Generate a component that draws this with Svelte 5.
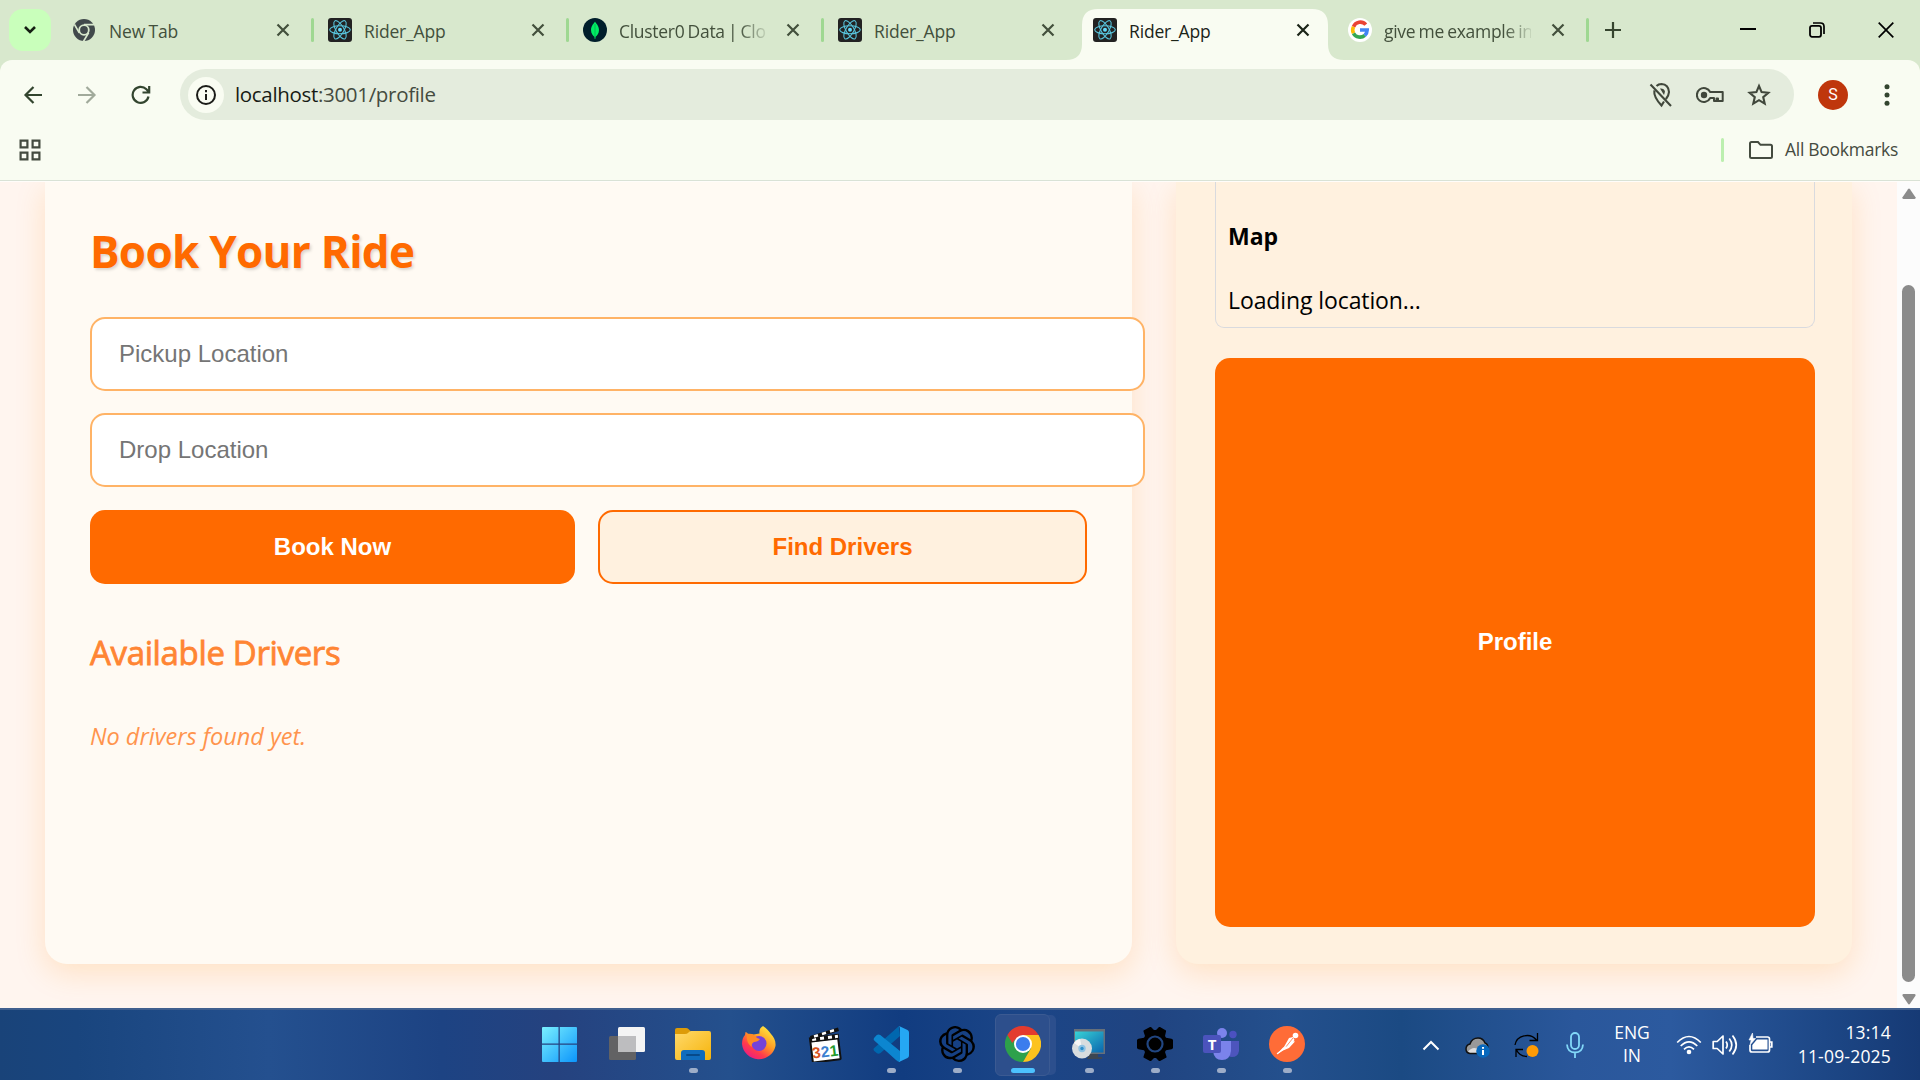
<script>
  const tabs = [
    { icon: 'newtab', title: 'New Tab' },
    { icon: 'react', title: 'Rider_App' },
    { icon: 'mongo', title: 'Cluster0 Data | Clo', fade: true },
    { icon: 'react', title: 'Rider_App' },
    { icon: 'react', title: 'Rider_App', active: true },
    { icon: 'google', title: 'give me example in', fade: true },
  ];
  const apps = ['start', 'taskview', 'explorer', 'firefox', 'mpc', 'vscode', 'gpt', 'chrome', 'installer', 'settings', 'teams', 'postman'];
  const running = ['explorer', 'vscode', 'gpt', 'installer', 'settings', 'teams', 'postman'];
</script>

{#snippet favicon(name)}
  {#if name === 'newtab'}
    <svg width="24" height="24" viewBox="0 0 24 24">
      <circle cx="11" cy="12" r="11" fill="#41494b" />
      <circle cx="11" cy="12" r="4.8" fill="none" stroke="#d8e8cd" stroke-width="1.8" />
      <path d="M11 6.6h10M6.3 14.8 1.4 6.3M15.6 14.8 10.5 23.4" stroke="#d8e8cd" stroke-width="1.7" />
    </svg>
  {:else if name === 'react'}
    <svg width="24" height="24" viewBox="0 0 24 24">
      <rect width="24" height="24" rx="3" fill="#222222" />
      <g fill="none" stroke="#58c4dc" stroke-width="1.1">
        <ellipse cx="12" cy="11.8" rx="10.3" ry="4" />
        <ellipse cx="12" cy="11.8" rx="10.3" ry="4" transform="rotate(60 12 11.8)" />
        <ellipse cx="12" cy="11.8" rx="10.3" ry="4" transform="rotate(120 12 11.8)" />
      </g>
      <circle cx="12" cy="11.8" r="2" fill="#61dafb" />
    </svg>
  {:else if name === 'mongo'}
    <svg width="24" height="24" viewBox="0 0 24 24">
      <circle cx="12" cy="12" r="12" fill="#001e2b" />
      <path d="M12 3.4c.5 1.6 4 3.8 4 8.600 0 3.600-2 5.600-3.400 6.700l-.3 2.400h-.6l-.3-2.400C10 17.600 8 15.600 8 12c0-4.800 3.500-7 4-8.600z" fill="#00ed64" />
      <path d="M12 6v13" stroke="#00a64a" stroke-width=".7" />
    </svg>
  {:else}
    <svg width="24" height="24" viewBox="0 0 24 24">
      <circle cx="12" cy="12" r="12" fill="#fff" />
      <g fill="none" stroke-width="3.600">
        <path d="M17.800 6.700A7.300 7.300 0 0 0 5.500 8.700" stroke="#ea4335" />
        <path d="M5.500 8.700a7.300 7.300 0 0 0 0 6.600" stroke="#fbbc05" />
        <path d="M5.500 15.300a7.300 7.300 0 0 0 11.300 2" stroke="#34a853" />
        <path d="M12 12h7.200a7.300 7.300 0 0 1-2.400 5.300" stroke="#4285f4" />
      </g>
    </svg>
  {/if}
{/snippet}

{#snippet appIcon(name)}
  <svg width="36" height="36" viewBox="0 0 36 36">
    {#if name === 'start'}
      <defs><linearGradient id="win" gradientUnits="userSpaceOnUse" x1="0" y1="0" x2="36" y2="36"><stop offset="0" stop-color="#7df3ff" /><stop offset="1" stop-color="#0c95fb" /></linearGradient></defs>
      <path d="M1 2a1 1 0 0 1 1-1h15.500v16.500H1zM18.800 1H35a1 1 0 0 1 1 1v15.500H18.800zM1 18.800h16.500V36H2a1 1 0 0 1-1-1zM18.800 18.800H36V35a1 1 0 0 1-1 1H18.800z" fill="url(#win)" />
    {:else if name === 'taskview'}
      <rect x="0" y="10" width="27" height="24" rx="1.500" fill="#626264" />
      <rect x="9" y="1" width="27" height="25" rx="1.500" fill="#f4f4f4" />
      <path d="M9 10h18v16H10a1 1 0 0 1-1-1z" fill="#bdbdbf" />
    {:else if name === 'explorer'}
      <defs><linearGradient id="fold" x1="0" y1="0" x2="1" y2="1"><stop offset="0" stop-color="#ffd96b" /><stop offset="1" stop-color="#f6b40b" /></linearGradient></defs>
      <path d="M0 4a2 2 0 0 1 2-2h9q1.500 0 2.500 1l2 2v6H0z" fill="#dd9b08" />
      <path d="M0 8h10q2 0 3-1l1-1q1-1 2.500-1H34a2 2 0 0 1 2 2v25a2 2 0 0 1-2 2H2a2 2 0 0 1-2-2z" fill="url(#fold)" />
      <path d="M6 34v-7a3 3 0 0 1 3-3h18a3 3 0 0 1 3 3v7z" fill="#0f6cbd" />
      <path d="M12 29h12" stroke="#074a8a" stroke-width="2" stroke-linecap="round" />
    {:else if name === 'firefox'}
      <defs><linearGradient id="fox" x1=".85" y1=".1" x2=".2" y2="1"><stop offset="0" stop-color="#ffe63f" /><stop offset=".4" stop-color="#ff9a24" /><stop offset=".7" stop-color="#ff3b4c" /><stop offset="1" stop-color="#e9178b" /></linearGradient></defs>
      <path d="M22 0c4 3 6 5 8 8 3 3 5 7 4.500 12A17 17 0 0 1 1 18c0-4 1-7 3-9l.5-3c1 .2 2 1.200 3 2.300 2-.6 4-.3 5 .2l6-1C18 4 19 2 22 0z" fill="url(#fox)" />
      <circle cx="18" cy="17.500" r="7.500" fill="#7542d9" />
      <path d="M6 8c5-1 8 1 10 4l3 1c-1 2-4 3-6 3-2 1-3 3-2 5-4-2-6-8-5-13z" fill="#ff8a24" />
    {:else if name === 'mpc'}
      <g transform="rotate(-7 18 20)">
        <rect x="4" y="14" width="28" height="21" rx="1" fill="#fff" stroke="#111" stroke-width="2" />
        <rect x="3" y="9.500" width="30" height="5" fill="#111" />
        <path d="M6 12h4m4 0h4m4 0h4m3 0h3" stroke="#fff" stroke-width="3" />
      </g>
      <path d="M3 10 31 1.500l1 3.500L4 13.500z" fill="#111" />
      <path d="m7 10.500 4-1.200m4-1.300 4-1.200m4-1.300 4-1.200" stroke="#fff" stroke-width="2.500" />
      <g font-family="Liberation Sans" font-weight="700" font-size="15.500" transform="rotate(-7 18 25)"><text x="5" y="31" fill="#d8531e">3</text><text x="13.800" y="31" fill="#3b7fd0">2</text><text x="22.500" y="31" fill="#249a2c">1</text></g>
    {:else if name === 'vscode'}
      <path d="M26 0 27 10 7.500 27q-2 1.200-3.500.2l-2.500-2q-2-1.700 0-3.400z" fill="#0067ae" />
      <path d="M1 12 3.800 9q1.700-1.200 3.500 0L27 25v11q-2 0-4-2L1.500 14.800Q0 13.500 1 12z" fill="#0c86d0" />
      <path d="m26 0 8.500 4q1.500.8 1.500 2.500v23q0 1.700-1.500 2.500L26 36q1-1 1-3V3q0-2-1-3z" fill="#25a7f3" />
    {:else if name === 'gpt'}
      <path transform="scale(1.500)" fill="#000" d="M22.282 9.821a5.985 5.985 0 0 0-.516-4.910 6.046 6.046 0 0 0-6.510-2.900A6.065 6.065 0 0 0 4.981 4.182a5.985 5.985 0 0 0-3.998 2.900 6.046 6.046 0 0 0 .743 7.097 5.980 5.980 0 0 0 .510 4.911 6.051 6.051 0 0 0 6.515 2.900A5.985 5.985 0 0 0 13.260 24a6.056 6.056 0 0 0 5.772-4.206 5.990 5.990 0 0 0 3.998-2.900 6.056 6.056 0 0 0-.748-7.073zM13.260 22.430a4.476 4.476 0 0 1-2.876-1.040l.141-.081 4.779-2.758a.795.795 0 0 0 .393-.681v-6.737l2.020 1.168a.071.071 0 0 1 .038.052v5.583a4.504 4.504 0 0 1-4.495 4.494zM3.600 18.304a4.470 4.470 0 0 1-.535-3.014l.142.085 4.783 2.759a.771.771 0 0 0 .781 0l5.843-3.369v2.332a.080.080 0 0 1-.033.062L9.740 19.950a4.500 4.500 0 0 1-6.140-1.646zM2.341 7.896a4.485 4.485 0 0 1 2.366-1.973V11.600a.766.766 0 0 0 .388.677l5.815 3.355-2.020 1.168a.076.076 0 0 1-.071 0l-4.830-2.787A4.504 4.504 0 0 1 2.341 7.872zm16.597 3.855-5.833-3.387L15.119 7.200a.076.076 0 0 1 .071 0l4.830 2.791a4.494 4.494 0 0 1-.676 8.105v-5.678a.790.790 0 0 0-.406-.667zm2.010-3.023-.141-.085-4.774-2.782a.776.776 0 0 0-.785 0L9.409 9.230V6.897a.066.066 0 0 1 .028-.061l4.830-2.787a4.500 4.500 0 0 1 6.681 4.660zM8.307 12.863l-2.020-1.164a.080.080 0 0 1-.038-.057V6.075a4.500 4.500 0 0 1 7.376-3.454l-.142.080-4.778 2.758a.795.795 0 0 0-.393.682zm1.098-2.366 2.602-1.500 2.607 1.500v2.999l-2.598 1.500-2.607-1.500z" />
    {:else if name === 'chrome'}
      <path d="M18 18 2.400 9A18 18 0 0 0 18 36l7.800-13.500z" fill="#2da14b" />
      <path d="M18 9h15.600A18 18 0 0 1 18 36l7.800-13.500z" fill="#fcc31e" />
      <path d="M2.400 9A18 18 0 0 1 33.600 9H18l-7.800 4.500-3 3.500z" fill="#e33b2e" />
      <circle cx="18" cy="18" r="9" fill="#fff" /><circle cx="18" cy="18" r="7.100" fill="#3b7ded" />
    {:else if name === 'installer'}
      <defs><linearGradient id="scr" x1="0" y1="0" x2="1" y2="1"><stop offset="0" stop-color="#38d3d6" /><stop offset="1" stop-color="#0a65ae" /></linearGradient></defs>
      <path d="M19 27h8v4h4v2H16z" fill="#3c4652" />
      <rect x="3" y="3" width="31" height="25" fill="#67707a" /><rect x="4" y="5.500" width="28.500" height="21" fill="url(#scr)" />
      <circle cx="11" cy="22.500" r="10" fill="#d9dddf" /><path d="M11 22.500 3 17a10 10 0 0 1 6-4.300z" fill="#f6f6f6" /><circle cx="11" cy="22.500" r="3.700" fill="#8fc3e4" /><circle cx="11" cy="22.500" r="1.700" fill="#2d8fcc" />
    {:else if name === 'settings'}
      <path d="M13 1h1l3 3h2l3-3h1l6 3.500v1L28 10l1 1.700 5.500 1 1.500 1v8.600l-1.500 1-5.500 1L28 26l1.500 4.500v1L23 35h-1l-3-3h-2l-3 3h-1l-6.500-3.500v-1L8 26l-1-1.700-5.500-1-1.500-1v-8.600l1.500-1 5.500-1L8 10 6.500 5.500v-1z" fill="#000" />
      <circle cx="18" cy="18" r="7.500" fill="none" stroke="#214681" stroke-width="2.200" />
    {:else if name === 'teams'}
      <circle cx="30" cy="8.500" r="3.700" fill="#4b51c0" /><circle cx="19" cy="7" r="5" fill="#7b83eb" />
      <path d="M23 15h13v10q-1 6-7 6-4 0-6-3z" fill="#4d55bd" />
      <path d="M11 15h17v10q-1 9-9 9-8 0-9-9z" fill="#7b83eb" />
      <rect x="0" y="9" width="18" height="18" rx="2" fill="#4b53bc" />
      <text x="9" y="23.500" text-anchor="middle" font-family="Open Sans" font-size="15" font-weight="700" fill="#fff">T</text>
    {:else}
      <circle cx="18" cy="18" r="18" fill="#ff6c37" />
      <g fill="#fff"><circle cx="26.500" cy="9.500" r="2.800" /><path d="m20 12 4-1 1.500 3-6 7.500-3 1.500-3.500 1.500z" /><path d="M23.500 15 26 15.500 20 22l-6 2.500-5.500 3.500 5-6z" /></g>
      <path d="m16 22 8-10" stroke="#ff6c37" stroke-width=".8" />
      <path d="m17 21-8.500 6.500" stroke="#fff" stroke-width="1.400" stroke-linecap="round" />
    {/if}
  </svg>
{/snippet}

<div class="screen">
  <header class="strip">
    <div class="search-tabs">
      <svg width="14" height="10" viewBox="0 0 14 10"><path d="m2 2 5 5 5-5" fill="none" stroke="#151f13" stroke-width="2.600" /></svg>
    </div>
    <div class="tabs">
      {#each tabs as tab, i}
        <div class="tab" class:active={tab.active} class:plain={i === 3}>
          {#if tab.active}
            <svg class="shape" width="278" height="51" viewBox="0 0 278 51"><path d="M0 51q16 0 16-16V16Q16 0 32 0h214q16 0 16 16v19q0 16 16 16z" fill="#f9fcf2" /></svg>
          {/if}
          <span class="fav">{@render favicon(tab.icon)}</span>
          <span class="title" class:fade={tab.fade}>{tab.title}</span>
          <svg class="close" width="14" height="14" viewBox="0 0 14 14"><path d="m1.500 1.500 11 11m0-11-11 11" stroke="currentColor" stroke-width="2.200" /></svg>
        </div>
      {/each}
    </div>
    <svg class="plus" width="16" height="16" viewBox="0 0 16 16"><path d="M8 0v16M0 8h16" stroke="#36452f" stroke-width="2.200" /></svg>
    <div class="window-controls">
      <svg width="16" height="16" viewBox="0 0 16 16"><path d="M0 7h16" stroke="#000" stroke-width="2" /></svg>
      <svg width="16" height="16" viewBox="0 0 16 16"><rect x="1" y="3.800" width="11" height="11" rx="2" fill="none" stroke="#000" stroke-width="1.800" /><path d="M4 1h7.500Q15 1 15 4.500V12" fill="none" stroke="#000" stroke-width="1.700" /></svg>
      <svg width="16" height="16" viewBox="0 0 16 16"><path d="m.7.700 14.600 14.600m0-14.600L.7 15.300" stroke="#000" stroke-width="1.700" /></svg>
    </div>
  </header>

  <div class="chrome">
    <div class="toolbar">
      <div class="nav">
        <svg width="20" height="20" viewBox="0 0 20 20"><path d="M19 10H2.500m8-8-8 8 8 8" fill="none" stroke="#33452f" stroke-width="2.200" /></svg>
        <svg width="20" height="20" viewBox="0 0 20 20"><path d="M1 10h16.500m-8-8 8 8-8 8" fill="none" stroke="#a1aa9b" stroke-width="2.200" /></svg>
        <svg width="20" height="20" viewBox="0 0 20 20"><path d="M17.500 11.500a8 8 0 1 1-2.100-7.200l2.300 2.500M18.200 1v6.500h-6.700" fill="none" stroke="#33452f" stroke-width="2.200" /></svg>
      </div>
      <div class="omnibox">
        <span class="info"><svg width="20" height="20" viewBox="0 0 20 20"><circle cx="10" cy="10" r="9" fill="none" stroke="#1b1c18" stroke-width="2" /><path d="M10 9v6M10 5v2.200" stroke="#1b1c18" stroke-width="2" /></svg></span>
        <span class="url"><b>localhost</b>:3001/profile</span>
        <div class="actions">
          <svg width="24" height="26" viewBox="0 0 24 26" fill="none" stroke="#40473b" stroke-width="2.100"><path d="M1.500 2.500 22 24M7.500 4Q9.500 2 12.500 2 19.500 2.500 20 10q-.2 3.500-3 7M5.300 8.500Q4.500 15 12.500 23.500l2.500-4" /><path d="M11 6.500q4-.5 5 3l-1 3.500z" fill="#40473b" stroke="none" /></svg>
          <svg width="28" height="18" viewBox="0 0 28 18" fill="none" stroke="#40473b" stroke-width="2"><path d="M14.200 6A7 7 0 1 0 14.200 12H18v3h2.500v-2.500h1.500V15h4.700V6z" stroke-linejoin="round" /><circle cx="8" cy="9" r="3.200" fill="#40473b" stroke="none" /></svg>
          <svg width="24" height="24" viewBox="0 0 24 24"><path d="m12 3 2.600 6.100 6.700.6-5.100 4.400 1.500 6.500-5.700-3.400-5.700 3.400 1.500-6.500-5.100-4.400 6.700-.6z" fill="none" stroke="#40473b" stroke-width="2.100" /></svg>
        </div>
      </div>
      <div class="avatar">S</div>
      <svg class="dots" width="6" height="22" viewBox="0 0 6 22" fill="#33452f"><circle cx="3" cy="2.800" r="2.500" /><circle cx="3" cy="11" r="2.500" /><circle cx="3" cy="19.200" r="2.500" /></svg>
    </div>
    <div class="bookmarks">
      <svg width="22" height="22" viewBox="0 0 22 22" fill="none" stroke="#444b3f" stroke-width="2.200"><path d="M1.600 1.600h6.800v6.800H1.600zM13.600 1.600h6.800v6.800h-6.800zM1.600 13.600h6.800v6.800H1.600zM13.600 13.600h6.800v6.800h-6.800z" /></svg>
      <span class="bar"></span>
      <svg width="24" height="18" viewBox="0 0 24 18"><path d="M1 2.500Q1 1 2.500 1H9l2.500 2.800h10q1.500 0 1.500 1.500v10.200q0 1.500-1.500 1.500h-19Q1 17 1 15.500z" fill="none" stroke="#444b3f" stroke-width="2" /></svg>
      <span class="all">All Bookmarks</span>
    </div>
  </div>

  <main class="view">
    <div class="page">
      <section class="book">
        <h1>Book Your Ride</h1>
        <div class="field">Pickup Location</div>
        <div class="field">Drop Location</div>
        <div class="buttons">
          <button class="primary">Book Now</button>
          <button class="outline">Find Drivers</button>
        </div>
        <h2>Available Drivers</h2>
        <p class="none">No drivers found yet.</p>
      </section>
      <aside class="side">
        <div class="map">
          <h3>Map</h3>
          <p>Loading location...</p>
        </div>
        <button class="profile">Profile</button>
      </aside>
    </div>
    <div class="scrollbar">
      <svg width="14" height="12" viewBox="0 0 14 12"><path d="M6 1.200Q7 0 8 1.200l5.500 8q.5 1.800-1 1.800h-11Q0 11 .5 9.200z" fill="#8b8b8b" /></svg>
      <div class="thumb"></div>
      <svg width="14" height="12" viewBox="0 0 14 12"><path d="M6 10.800q1 1.200 2 0l5.500-8Q14 1 12.500 1h-11Q0 1 .5 2.800z" fill="#8b8b8b" /></svg>
    </div>
  </main>

  <footer class="taskbar">
    <div class="apps">
      {#each apps as app}
        <div class="app" class:start={app === 'start'} class:current={app === 'chrome'} class:running={running.includes(app)}>{@render appIcon(app)}</div>
      {/each}
    </div>
    <div class="tray">
      <svg class="chev" width="18" height="11" viewBox="0 0 18 11"><path d="m1.500 9.500 7.500-7.500 7.500 7.500" fill="none" stroke="#fff" stroke-width="2" /></svg>
      <svg class="cloud" width="26" height="22" viewBox="0 0 26 22"><path d="M5 17.500q-4-.5-4-4.500 0-4 4-5 2-6 8-6 5 0 7 5 3 1 3 5 0 5-5 5.500z" fill="#999" stroke="#111" stroke-width="1.500" /><path d="M3 15.500q4-5 9-3l3 4H5z" fill="#ddd" /><circle cx="18" cy="15" r="6.800" fill="#0868bd" /><path d="M18 14v5M18 11v1.800" stroke="#fff" stroke-width="2" /></svg>
      <svg class="sync" width="26" height="26" viewBox="0 0 26 26"><path d="M1 13A12 11 0 0 1 22.500 8M23.500 1v7.500h-8M13 24.500A12 11 0 0 1 2.500 18M2 25v-7.500h7" fill="none" stroke="#000" stroke-width="1.300" /><circle cx="18.500" cy="19" r="6" fill="#ff9b05" /></svg>
      <svg class="mic" width="18" height="26" viewBox="0 0 18 26" fill="none" stroke="#82d8f8" stroke-width="1.800"><rect x="5" y="1" width="8" height="16" rx="4" /><path d="M1 12.500q.5 8 8 8t8-8M9 20.500V26" /></svg>
      <div class="lang">ENG<br />IN</div>
      <svg class="wifi" width="26" height="20" viewBox="0 0 26 20" fill="none" stroke="#fff" stroke-width="1.700"><path d="M1.200 7.500q11.800-12 23.600 0M4.700 11q8.300-8.300 16.600 0M8 14.300q5-5 10 0" /><circle cx="13" cy="17" r="2.300" fill="#fff" stroke="none" /></svg>
      <svg class="vol" width="26" height="22" viewBox="0 0 26 22" fill="none" stroke="#fff" stroke-width="1.700"><path d="M1.200 7.500h4L11 2v18l-5.800-5.500h-4z" stroke-linejoin="round" /><path d="M14 7.500q2.500 3.500 0 7M17.300 4.500q5 6.500 0 13M20.500 1.500q7.500 9.500 0 19" /></svg>
      <svg class="bat" width="25" height="20" viewBox="0 0 25 20"><path d="M8 4h11.500q2 0 2 2v11q0 2-2 2H4q-2 0-2-2v-5" fill="none" stroke="#fff" stroke-width="1.700" /><path d="M9 6.500h10.500v10H4.300V12z" fill="#fff" /><path d="M22 9h1.800v5H22" stroke="#fff" stroke-width="1.700" fill="none" /><path d="M4.500 0 1 7h2.200L2 12l5.500-6.500H5z" fill="#fff" stroke="#fff" stroke-width=".6" /></svg>
      <div class="clock">13:14<br />11-09-2025</div>
    </div>
  </footer>
</div>

<style>
  :global(body) { margin: 0; overflow: hidden; }
  .screen { width: 1920px; height: 1080px; display: flex; flex-direction: column; overflow: hidden; font-family: "Open Sans", "Noto Sans", sans-serif; background: #d8e8cd; }
  .screen * { box-sizing: border-box; }
  svg { display: block; flex: none; }

  .strip { height: 60px; flex: none; display: flex; padding-left: 9px; }
  .search-tabs { width: 42px; height: 42px; margin: 9px 8px 0 0; border-radius: 14px; background: #c9ffbb; display: grid; place-items: center; }
  .tabs { display: flex; padding-top: 9px; }
  .tab { position: relative; width: 255px; height: 51px; padding: 0 24px 9px 14px; display: flex; align-items: center; color: #43503c; }
  .tab::after { content: ""; position: absolute; right: 0; top: 9px; width: 3px; height: 24px; border-radius: 2px; background: #9fd892; }
  .tab.plain::after, .tab.active::after { display: none; }
  .tab.active { color: #1b2418; }
  .shape { position: absolute; left: -13px; top: 0; }
  .fav { position: relative; }
  .title { position: relative; margin-left: 12px; width: 148px; font-size: 17.500px; letter-spacing: -0.16px; word-spacing: -1px; line-height: 28px; padding-top: 2px; white-space: nowrap; overflow: hidden; }
  .title.fade { letter-spacing: -0.3px; mask-image: linear-gradient(90deg, #000 120px, transparent 151px); }
  .close { position: relative; margin-left: 20px; }
  .plus { margin: 22px 0 0 16px; }
  .window-controls { margin: 22px 26px 0 auto; display: flex; gap: 53px; }

  .chrome { height: 121px; flex: none; background: #f9fcf2; border-radius: 12px 12px 0 0; border-bottom: 1px solid #d9e2d6; display: flex; flex-direction: column; }
  .toolbar { height: 69px; display: flex; align-items: center; padding: 0 30px 0 23px; }
  .nav { display: flex; gap: 34px; }
  .omnibox { margin-left: 29px; width: 1614px; height: 51px; border-radius: 26px; background: #e4ecdd; display: flex; align-items: center; padding: 0 23px 0 8px; }
  .info { width: 36px; height: 36px; border-radius: 50%; background: #f9fcf2; display: grid; place-items: center; }
  .url { margin-left: 11px; padding-bottom: 1px; font-size: 20.500px; letter-spacing: -0.32px; color: #454b40; }
  .url b { font-weight: 400; color: #171b14; }
  .actions { margin-left: auto; display: flex; align-items: center; gap: 23px; }
  .avatar { margin-left: 24px; width: 30px; height: 30px; border-radius: 50%; background: #bf360c; color: #fff; font: 16px/30px Roboto, sans-serif; text-align: center; }
  .dots { margin-left: auto; }
  .bookmarks { height: 42px; display: flex; align-items: center; padding: 0 22px 0 19px; }
  .bar { margin-left: auto; width: 3px; height: 24px; border-radius: 2px; background: #bcefaf; }
  .bar + svg { margin: 0 12px 0 25px; }
  .all { font-size: 17.500px; letter-spacing: -0.28px; padding-bottom: 2px; color: #454b40; }

  .view { height: 827px; flex: none; display: flex; overflow: hidden; border-top: 1px solid #fffdfa; background: #fff6ef; }
  .page { width: 1897px; display: flex; gap: 44px; padding: 0 45px; background: #fff5ef; }
  .book { width: 1087px; height: 782px; padding: 39px 45px 0; background: #fffaf3; border-radius: 0 0 22px 22px; box-shadow: 0 9px 30px rgba(255, 140, 0, .18); }
  .side { width: 676px; height: 782px; padding: 0 37px 0 39px; background: #fff1df; border-radius: 0 0 22px 22px; box-shadow: 0 9px 30px rgba(255, 140, 0, .18); }
  h1 { margin: 0; font-size: 44px; line-height: 60px; letter-spacing: -0.7px; color: #ff6a00; text-shadow: 1.500px 1.500px 3px rgba(0, 0, 0, .15); white-space: nowrap; }
  .field { position: relative; width: 1055px; height: 74px; margin-bottom: 22px; padding-left: 27px; border: 2px solid #ffb366; border-radius: 15px; background: #fff; color: #757575; font: 24px/70px "Liberation Sans", Arial, sans-serif; }
  h1 + .field { margin-top: 36px; }
  .buttons { display: flex; gap: 23px; padding-top: 1px; }
  button { border: 0; border-radius: 15px; font: 700 24px/1 "Liberation Sans", Arial, sans-serif; padding: 0; }
  .primary, .profile { background: #ff6a00; color: #fff; }
  .primary { width: 485px; height: 74px; }
  .outline { width: 489px; height: 74px; border: 2px solid #ff6a00; background: #fff1df; color: #ff6a00; }
  h2 { margin: 45px 0 0; font-size: 33px; font-weight: 400; line-height: 48px; letter-spacing: -0.35px; color: #ff8533; -webkit-text-stroke: .8px #ff8533; white-space: nowrap; }
  .none { margin: 41px 0 0; font-size: 23.500px; line-height: 36px; font-style: italic; color: #ff944d; white-space: nowrap; }
  .map { height: 146px; padding: 36px 12px 0; border: 1px solid #d9dade; border-top: 0; border-radius: 0 0 9px 9px; color: #000; }
  .map h3 { margin: 0; font-size: 23px; line-height: 36px; }
  .map p { margin: 28px 0 0; font-size: 23px; line-height: 36px; letter-spacing: -0.1px; }
  .profile { width: 600px; height: 569px; margin-top: 30px; padding-bottom: 2px; display: block; }
  .scrollbar { width: 23px; display: flex; flex-direction: column; align-items: center; padding: 6px 0 3px; background: #fcfcfc; }
  .thumb { width: 13px; height: 697px; margin: 85px 0 auto; border-radius: 7px; background: #8b8b8b; }

  .taskbar { height: 72px; flex: none; display: flex; padding-left: 526px; border-top: 2px solid #405f8e; background: linear-gradient(90deg, #194379 0, #19457e 4%, #24508f 14%, #1d4383 23%, #25427f 29%, #24508d 38%, #113c80 47%, #1b4587 53%, #204481 60%, #24508d 67%, #1b4a83 73%, #2a579b 82%, #2c5a9f 87%, #1d4786 95%, #163a75 100%); }
  .apps { display: flex; }
  .app { position: relative; width: 66px; height: 70px; display: flex; justify-content: center; padding-top: 16px; }
  .app.start { margin-right: 2px; }
  .app svg { position: relative; }
  .app.running::after, .app.current::after { content: ""; position: absolute; left: 29px; top: 58px; width: 9px; height: 5px; border-radius: 3px; background: #9dadc8; }
  .app.current::after { left: 21px; width: 24px; background: #4cc2ff; }
  .app.current::before { content: ""; position: absolute; left: 5px; top: 4px; width: 53px; height: 60px; border: 1px solid #3b5a92; border-radius: 6px; background: #2d4f8c; box-shadow: 7px 0 0 -1px #2c4f8d; }
  .tray { margin-left: auto; display: flex; padding-right: 29px; color: #fff; font-size: 17.500px; line-height: 24px; }
  .tray svg { margin-top: 24px; }
  .tray .chev { margin: 30px 25px 0 0; }
  .tray .cloud { margin: 26px 23px 0 0; }
  .tray .sync { margin: 22px 26px 0 0; }
  .tray .mic { margin: 22px 28px 0 0; }
  .lang { width: 40px; text-align: center; padding-top: 11px; line-height: 23px; }
  .tray .wifi { margin: 25px 10px 0 24px; }
  .tray .vol { margin: 24px 10px 0 0; }
  .tray .bat { margin: 23px 0 0; }
  .clock { width: 118px; text-align: right; padding-top: 10px; letter-spacing: .2px; white-space: nowrap; }
</style>
